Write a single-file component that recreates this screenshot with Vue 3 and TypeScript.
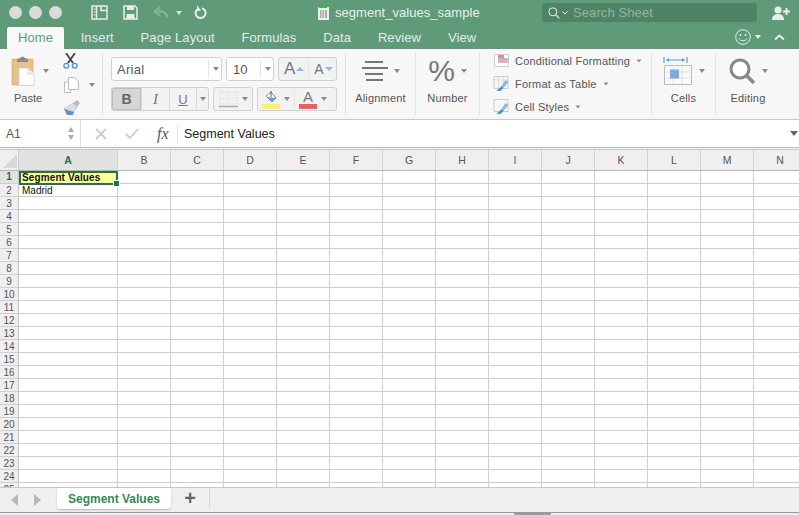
<script setup lang="ts">
const tabs: string[] = ['Insert', 'Page Layout', 'Formulas', 'Data', 'Review', 'View']
const cols: string[] = 'BCDEFGHIJKLMN'.split('')
const rows: number[] = Array.from({ length: 25 }, (_, i) => i + 1)
</script>

<template>
  <div class="window">
    <header class="titlebar">
      <div class="lights"><i></i><i></i><i></i></div>
      <svg class="ti sidebar" width="17" height="15" viewBox="0 0 17 15"><path d="M1 1h15v13H1zM5.500 1v13M10 1v4.500h6" fill="none" stroke="#e6efe9" stroke-width="1.500"/><path d="M2.500 4h2M2.500 7h2M2.500 10h2" stroke="#e6efe9"/></svg>
      <svg class="ti save" width="15" height="15" viewBox="0 0 15 15"><path d="M1 1h11l2 2v11H1z" fill="none" stroke="#e6efe9" stroke-width="1.500"/><path d="M4 1h7v4H4zM3.500 9h8v5h-8z" fill="#e6efe9"/></svg>
      <svg class="ti undo" width="16" height="13" viewBox="0 0 16 13"><path d="M14.500 11.500C14 7 10 4.500 5 5.500M7 1 2 5.500l5 4" fill="none" stroke="#8fb8a0" stroke-width="2"/></svg>
      <span class="tri small light dim"></span>
      <svg class="ti redo" width="13" height="15" viewBox="0 0 13 15"><path d="M8 3.200A5 5 0 1 1 3 4.500" fill="none" stroke="#e6efe9" stroke-width="2"/><path d="M3 0v6.500l4-1z" fill="#e6efe9"/></svg>
      <div class="doc">
        <svg width="11" height="15" viewBox="0 0 11 15"><path d="M0 2h11v13H0z" fill="#eef2ef"/><path d="M1 0h8v3H1z" fill="#39b54a"/><path d="M2 5h7v8H2z" fill="#aab4ae"/><path d="M4 5v8M6.500 5v8" stroke="#eef2ef" stroke-width=".7"/></svg>
        <span>segment_values_sample</span>
      </div>
      <div class="search">
        <svg width="12" height="12" viewBox="0 0 12 12"><circle cx="4.800" cy="4.800" r="4" fill="none" stroke="#e6efe9" stroke-width="1"/><path d="m7.800 7.800 3.500 3.500" stroke="#e6efe9" stroke-width="1.200"/></svg>
        <svg class="chev" width="6" height="4" viewBox="0 0 6 4"><path d="m.5.500 2.500 2.500L5.500.500" fill="none" stroke="#e6efe9"/></svg>
        <span>Search Sheet</span>
      </div>
      <svg class="person" width="18" height="14" viewBox="0 0 18 14"><circle cx="6" cy="4" r="3.500" fill="#e6efe9"/><path d="M0 14c0-4 2.500-6 6-6s6 2 6 6z" fill="#e6efe9"/><path d="M11 5.500h7M14.500 2v7" stroke="#e6efe9" stroke-width="2"/></svg>
    </header>

    <nav class="tabbar">
      <span class="tab home">Home</span>
      <span v-for="t in tabs" :key="t" class="tab">{{ t }}</span>
      <div class="tabright">
        <svg width="16" height="16" viewBox="0 0 16 16"><circle cx="8" cy="8" r="7.300" fill="none" stroke="#e6efe9"/><circle cx="5.500" cy="6" r="1" fill="#e6efe9"/><circle cx="10.500" cy="6" r="1" fill="#e6efe9"/><path d="M4 9.500c1.500 3 6.500 3 8 0" fill="none" stroke="#e6efe9"/></svg>
        <span class="tri small light"></span>
        <svg class="caret" width="11" height="7" viewBox="0 0 11 7"><path d="m1 5.500 4.500-4 4.500 4" fill="none" stroke="#e6efe9" stroke-width="2"/></svg>
      </div>
    </nav>

    <section class="ribbon">
      <div class="paste">
        <div class="paste-top">
          <svg width="24" height="30" viewBox="0 0 24 30"><rect x="1" y="3" width="21" height="26" rx="1" fill="#e8c08e" stroke="#c9a272" stroke-width=".6"/><path d="M6 4c0-2 3-1 3.500-2.500C10 .5 13 .5 13.500 1.500 14 3 17 2 17 4v2H6z" fill="#8a8a8a"/><path d="M8 12h9l6 6v11.500H8z" fill="#fff" stroke="#ccc" stroke-width=".7"/><path d="M17 12v6h6" fill="#f2f2f2" stroke="#ccc" stroke-width=".7"/></svg>
          <span class="tri"></span>
        </div>
        <span class="lbl">Paste</span>
      </div>
      <div class="clip">
        <svg width="15" height="16" viewBox="0 0 15 16"><path d="M3 0l7 10M12 0 5 10" stroke="#444" stroke-width="1.800"/><circle cx="3.300" cy="12.800" r="2.400" fill="none" stroke="#4a90d9" stroke-width="1.200"/><circle cx="11.700" cy="12.800" r="2.400" fill="none" stroke="#4a90d9" stroke-width="1.200"/></svg>
        <div class="copy">
          <svg width="15" height="16" viewBox="0 0 15 16"><path d="M.5 5h6v10.500h-6z" fill="#fff" stroke="#bbb"/><path d="M4.500.500h6l4 4v8h-10z" fill="#fff" stroke="#bbb"/></svg>
          <span class="tri"></span>
        </div>
        <svg width="17" height="15" viewBox="0 0 17 15"><path d="M10 3l4-3 3 3-3 4z" fill="#bbb"/><path d="M10 3l4 4-3 5L1 9z" fill="#ddd" stroke="#aaa" stroke-width=".5"/><path d="M1 9l10 3-1 3H4z" fill="#5b93cc"/></svg>
      </div>
      <i class="sep first"></i>
      <div class="font">
        <div class="frow">
          <div class="box fname"><span>Arial</span><em></em><span class="tri"></span></div>
          <div class="box fsize"><span>10</span><em></em><span class="tri"></span></div>
          <div class="box fgrow">
            <span class="big">A</span><span class="up"></span><em></em><span class="mid">A</span><span class="down"></span>
          </div>
        </div>
        <div class="frow second">
          <div class="box style">
            <b class="cell active">B</b>
            <i class="cell italic">I</i>
            <u class="cell ul">U</u>
            <span class="tri"></span>
          </div>
          <div class="box border">
            <svg width="19" height="17" viewBox="0 0 19 17"><path d="M1 1h17v12H1zM9.500 1v12M1 7h17" fill="none" stroke="#ddd" stroke-dasharray="1.500 1"/><path d="M0 15.500h19" stroke="#aaa" stroke-width="1.500"/></svg>
            <span class="tri"></span>
          </div>
          <div class="box color">
            <div class="swatch fill">
              <svg width="14" height="14" viewBox="0 0 14 14"><path d="M2 6l5-4 5 6-4 4z" fill="#fff" stroke="#6a8fb5"/><path d="M7 1v6" stroke="#555"/><path d="M3 7l5 5 4-4z" fill="#6aa0d8"/></svg>
              <span class="bar yellow"></span>
            </div>
            <span class="tri"></span>
            <em></em>
            <div class="swatch text">
              <span class="letter">A</span>
              <span class="bar red"></span>
            </div>
            <span class="tri"></span>
          </div>
        </div>
      </div>
      <i class="sep"></i>
      <div class="group g-align">
        <div class="gicon">
          <svg width="26" height="20" viewBox="0 0 26 20"><path d="M3 1h18M0 7h26M3 13h18M4 19h17" stroke="#777" stroke-width="1.800"/></svg>
          <span class="tri"></span>
        </div>
        <span class="lbl">Alignment</span>
      </div>
      <i class="sep"></i>
      <div class="group g-num">
        <div class="gicon">
          <span class="pct">%</span>
          <span class="tri"></span>
        </div>
        <span class="lbl">Number</span>
      </div>
      <i class="sep"></i>
      <div class="styles">
        <div class="srow">
          <svg width="15" height="13" viewBox="0 0 15 13"><path d="M.5.500h14v12H.5z" fill="#fff" stroke="#ccc"/><path d="M4 1h6v3H4z" fill="#e58a8a"/><path d="M4 4h10v2H4z" fill="#9cc2e8"/><path d="M4 6h10v3H4z" fill="#f0a8a8"/></svg>
          <span>Conditional Formatting</span><span class="tri"></span>
        </div>
        <div class="srow">
          <svg width="16" height="16" viewBox="0 0 16 16"><path d="M.5.500h14v12H.5z" fill="#f4f4f4" stroke="#ccc"/><path d="M.5 4h14M5 .5v12M10 .5v12" stroke="#ddd"/><path d="M12 4l3 2-5 6-2-2z" fill="#8fb7e0"/><path d="M8 10l2 2-3 3H3z" fill="#4a90d9"/></svg>
          <span>Format as Table</span><span class="tri"></span>
        </div>
        <div class="srow">
          <svg width="16" height="16" viewBox="0 0 16 16"><path d="M.5.500h14v12H.5z" fill="#f8f8f8" stroke="#ccc"/><path d="M12 4l3 2-5 6-2-2z" fill="#8fb7e0"/><path d="M8 10l2 2-3 3H3z" fill="#4a90d9"/></svg>
          <span>Cell Styles</span><span class="tri"></span>
        </div>
      </div>
      <i class="sep"></i>
      <div class="group g-cells">
        <div class="gicon">
          <svg width="30" height="29" viewBox="0 0 30 29"><path d="M1 0v6M24 0v6M4 3h17" stroke="#5b9bd5" stroke-width="1.200"/><path d="m3 3 3-2v4zM22 3l-3-2v4z" fill="#5b9bd5"/><path d="M1.500 8.500h27v19h-27z" fill="#f8f8f8" stroke="#bbb"/><path d="M10 9v18M19 9v18M2 15h26M2 21h26" stroke="#e2e2e2"/><path d="M7 12.500h9v9H7z" fill="#7eabdc"/></svg>
          <span class="tri"></span>
        </div>
        <span class="lbl">Cells</span>
      </div>
      <i class="sep"></i>
      <div class="group g-edit">
        <div class="gicon">
          <svg width="27" height="27" viewBox="0 0 27 27"><circle cx="11" cy="11" r="9" fill="#fff" stroke="#888" stroke-width="3"/><path d="m17 17 8 8" stroke="#888" stroke-width="3.500"/></svg>
          <span class="tri"></span>
        </div>
        <span class="lbl">Editing</span>
      </div>
    </section>

    <section class="formula">
      <div class="namebox">
        <span>A1</span>
        <div class="spin"><b></b><s></s></div>
      </div>
      <svg class="fx-x" width="12" height="12" viewBox="0 0 12 12"><path d="m1 1 10 10M11 1 1 11" stroke="#ccc" stroke-width="1.800"/></svg>
      <svg class="fx-c" width="14" height="11" viewBox="0 0 14 11"><path d="m1 6 4 4 8-9" fill="none" stroke="#ccc" stroke-width="1.800"/></svg>
      <span class="fx">fx</span>
      <i class="fsep"></i>
      <span class="ftext">Segment Values</span>
      <span class="fdrop"></span>
    </section>

    <main class="sheet">
      <div class="hrow">
        <div class="corner"><span></span></div>
        <div class="colhead sel">A</div>
        <div v-for="c in cols" :key="c" class="colhead">{{ c }}</div>
      </div>
      <div v-for="r in rows" :key="r" class="row">
        <div class="rowhead" :class="{ sel: r === 1 }">{{ r }}</div>
        <div class="c a" :class="{ selected: r === 1 }">
          <template v-if="r === 1"><b>Segment Values</b><span class="handle"></span></template>
          <template v-else-if="r === 2">Madrid</template>
        </div>
        <div v-for="c in cols" :key="c" class="c"></div>
      </div>
    </main>

    <footer class="sheetbar">
      <span class="nav left"></span>
      <span class="nav right"></span>
      <div class="sheettab">Segment Values</div>
      <span class="plus">+</span>
      <i class="barsep"></i>
    </footer>
    <div class="statusline"><span></span></div>
  </div>
</template>

<style scoped>
.window { width: 799px; height: 515px; overflow: hidden; background: #f5f5f5; font-family: "Liberation Sans", Arial, sans-serif; color: #555; display: flex; flex-direction: column; }
.titlebar { height: 25px; background: #5f9a79; display: flex; align-items: center; flex: none; position: relative; }
.lights { display: flex; gap: 7px; margin-left: 9px; }
.lights i { width: 13px; height: 13px; border-radius: 50%; background: #d9dcda; }
.ti { flex: none; }
.sidebar { margin-left: 29px; }
.save { margin-left: 15px; }
.undo { margin-left: 15px; opacity: .9; }
.dim { margin-left: 7px; opacity: .9; }
.redo { margin-left: 12px; }
.doc { display: flex; align-items: center; gap: 6px; margin-left: 111px; color: #e8f0eb; font-size: 13px; letter-spacing: .04px; width: 224px; flex: none; }
.search { width: 215px; height: 19px; background: #4f8366; border-radius: 3px; display: flex; align-items: center; padding-left: 6px; box-sizing: border-box; color: #8db79f; font-size: 13px; letter-spacing: .1px; flex: none; }
.chev { margin: 0 5px 0 2px; }
.person { margin-left: 15px; }
.tabbar { height: 24px; background: #5f9a79; display: flex; align-items: flex-end; font-size: 13px; flex: none; }
.tab { height: 22px; line-height: 21px; padding: 0 13.4px; color: #e3ece6; letter-spacing: .1px; }
.tab.home { background: #f8f8f8; color: #5f9a79; margin: 0 3.200px 0 7px; padding: 0 11px; border-radius: 2px 2px 0 0; }
.tabright { margin-left: auto; height: 24px; display: flex; align-items: center; gap: 4px; padding-right: 14px; margin-top: -4px; }
.caret { margin-left: 9px; }

.tri { display: inline-block; width: 0; height: 0; border-left: 3px solid transparent; border-right: 3px solid transparent; border-top: 4px solid #8a8a8a; flex: none; }
.tri.light { border-top-color: #e6efe9; }

.ribbon { height: 70px; flex: none; display: flex; background: #f7f7f7; border-bottom: 1px solid #c9c9c9; box-sizing: content-box; }
.lbl { font-size: 11px; color: #555; letter-spacing: .2px; }
.paste { width: 58px; flex: none; display: flex; flex-direction: column; padding-left: 11px; box-sizing: border-box; }
.paste-top { display: flex; align-items: center; gap: 8px; margin-top: 7px; height: 30px; }
.paste .lbl { margin: 6px 0 0 3px; letter-spacing: 0; }
.clip { width: 44px; flex: none; display: flex; flex-direction: column; padding: 4px 0 0 5px; box-sizing: border-box; gap: 7.500px; }
.copy { display: flex; align-items: center; gap: 10px; height: 16px; margin-left: 1px; }
.sep { width: 1px; height: 62px; background: #e2e2e2; margin-top: 4px; flex: none; }
.font { width: 242px; flex: none; padding: 8px 0 0 8px; box-sizing: border-box; }
.frow { display: flex; gap: 4px; height: 24px; }
.frow.second { margin-top: 6px; }
.box { border: 1px solid #d0d0d0; border-radius: 3px; background: #fff; display: flex; align-items: center; box-sizing: border-box; height: 24px; font-size: 13px; color: #555; }
.box em { width: 1px; height: 18px; background: #e4e4e4; flex: none; }
.fname { width: 111px; padding-left: 5px; }
.fname span:first-child { width: 91px; letter-spacing: .3px; }
.fname .tri, .fsize .tri { margin-left: 4px; }
.fsize { width: 48px; padding-left: 6px; }
.fsize span:first-child { width: 27px; }
.fgrow { width: 59px; background: #f2f2f2; padding-left: 5px; }
.big { font-size: 17px; color: #777; }
.mid { font-size: 14px; color: #777; margin-left: 5px; }
.up { width: 0; height: 0; border: 4px solid transparent; border-top: 0; border-bottom: 4px solid #8db8e6; margin: 0 4px 0 1px; }
.down { width: 0; height: 0; border: 4px solid transparent; border-bottom: 0; border-top: 4px solid #8db8e6; margin-left: 1px; }
.style { width: 98px; background: #f2f2f2; overflow: hidden; }
.cell { display: flex; height: 100%; align-items: center; justify-content: center; width: 28px; border-right: 1px solid #dcdcdc; box-sizing: border-box; font-size: 14px; color: #777; font-family: "Liberation Serif", serif; }
.cell.active { width: 30px; background: #d6d6d6; color: #666; font-family: "Liberation Sans", sans-serif; box-shadow: inset 0 0 0 1px #bdbdbd; }
.cell.italic { width: 28px; font-size: 15px; }
.cell.ul { width: 27px; font-family: "Liberation Sans", sans-serif; font-size: 13px; }
.style .tri { margin-left: 3px; }
.border { width: 40px; background: #f2f2f2; padding-left: 5px; gap: 4px; }
.color { width: 80px; background: #f2f2f2; padding-left: 4px; }
.color .tri { margin-left: 4px; }
.color em { margin-left: 4px; }
.swatch { display: flex; flex-direction: column; align-items: center; width: 18px; }
.swatch.text { margin-left: 4px; }
.letter { font-size: 15px; line-height: 15px; color: #777; }
.bar { width: 18px; height: 5px; display: block; }
.yellow { background: #fdf06a; }
.red { background: #f55a63; }
.group { display: flex; flex-direction: column; align-items: center; flex: none; }
.gicon { display: flex; align-items: center; gap: 6px; height: 34px; margin-top: 5px; }
.group .lbl { margin-top: 4px; }
.g-align { width: 69px; }
.g-num { width: 63px; }
.g-cells { width: 63px; }
.g-edit { width: 64px; }
.pct { font-size: 30px; line-height: 36px; color: #777; font-family: "Liberation Sans", sans-serif; }
.styles { width: 171px; flex: none; padding: 0 0 0 13px; box-sizing: border-box; font-size: 11px; color: #555; letter-spacing: .2px; }
.srow { display: flex; align-items: center; height: 23px; gap: 5px; }
.srow svg { width: 17px; flex: none; }
.srow .tri { margin-left: 1px; transform: scale(.8); }

.formula { height: 27px; flex: none; display: flex; align-items: center; background: #fff; border-bottom: 1px solid #bdbdbd; box-sizing: content-box; }
.namebox { width: 81px; height: 100%; display: flex; align-items: center; justify-content: space-between; padding: 0 6px; box-sizing: border-box; border-right: 1px solid #ddd; font-size: 12px; color: #555; flex: none; }
.spin { display: flex; flex-direction: column; gap: 3px; }
.spin b { width: 0; height: 0; border: 3.500px solid transparent; border-top: 0; border-bottom: 5px solid #aaa; }
.spin s { width: 0; height: 0; border: 3.500px solid transparent; border-bottom: 0; border-top: 5px solid #aaa; }
.fx-x { margin-left: 14px; }
.fx-c { margin-left: 18px; }
.fx { font-family: "Liberation Serif", serif; font-style: italic; font-size: 16px; color: #555; margin-left: 18px; width: 17px; }
.fsep { width: 1px; height: 18px; background: #e2e2e2; margin-left: 3px; }
.ftext { font-size: 12.500px; color: #222; margin-left: 6px; }
.fdrop { margin-left: auto; margin-right: 1px; width: 0; height: 0; border: 4px solid transparent; border-bottom: 0; border-top: 5px solid #666; }

.sheet { height: 338px; flex: none; overflow: hidden; background: #fff; border-top: 1px solid #c4c4c4; margin-top: 1px; box-sizing: border-box; width: 799px; }
.hrow { display: flex; height: 21px; background: #efefef; border-bottom: 1px solid #b4b4b4; box-sizing: border-box; width: 810px; }
.row { display: flex; height: 13px; width: 810px; }
.corner { width: 19px; flex: none; border-right: 1px solid #ccc; box-sizing: border-box; position: relative; }
.corner span { position: absolute; right: 1px; bottom: 2px; width: 0; height: 0; border-left: 14px solid transparent; border-bottom: 14px solid #d8d8d8; }
.colhead { width: 53px; flex: none; text-align: center; font-size: 10.500px; line-height: 20px; color: #555; border-right: 1px solid #d4d4d4; box-sizing: border-box; }
.colhead.sel { width: 99px; background: #e2e2e2; color: #217346; font-weight: bold; }
.rowhead { width: 19px; flex: none; background: #efefef; border-right: 1px solid #c4c4c4; border-bottom: 1px solid #d0d0d0; box-sizing: border-box; font-size: 10px; line-height: 14px; height: 13px; text-align: center; color: #555; }
.rowhead.sel { background: #e2e2e2; color: #217346; font-weight: bold; line-height: 12px; }
.c { width: 53px; flex: none; border-right: 1px solid #cfcfcf; border-bottom: 1px solid #cfcfcf; box-sizing: border-box; font-size: 10px; line-height: 14px; height: 13px; color: #111; padding-left: 3px; }
.c.a { width: 99px; }
.c.selected { background: #ffff99; position: relative; box-shadow: inset 0 0 0 2px #217346; border: 0; line-height: 14px; height: 14px; letter-spacing: .12px; z-index: 1; }
.handle { position: absolute; right: -2px; bottom: -2px; width: 5px; height: 5px; background: #217346; border: 1px solid #fff; box-sizing: content-box; }

.sheetbar { height: 25px; flex: none; display: flex; align-items: flex-start; background: #f0f0f0; border-top: 1px solid #c8c8c8; box-sizing: border-box; position: relative; }
.nav { width: 0; height: 0; margin-top: 6px; border: 6px solid transparent; }
.nav.left { border-left: 0; border-right: 7px solid #b8b8b8; margin-left: 11px; }
.nav.right { border-right: 0; border-left: 7px solid #b8b8b8; margin-left: 16px; }
.sheettab { width: 114px; height: 21px; margin-left: 16px; background: #fff; box-shadow: 0 1px 2px rgba(0,0,0,.25); border-radius: 0 0 3px 3px; text-align: center; line-height: 22px; font-size: 12px; font-weight: bold; color: #2f8a5b; }
.plus { width: 38px; text-align: center; font-size: 20px; line-height: 21px; font-weight: bold; color: #666; }
.barsep { width: 1px; height: 20px; background: #d4d4d4; }
.statusline { height: 3px; flex: none; background: #f0f0f0; border-top: 1px solid #9a9a9a; box-sizing: border-box; }
.statusline span { display: block; width: 37px; height: 2px; margin-left: 514px; background: #9c9c9c; }
</style>

<style>
html, body { margin: 0; overflow: hidden; background: #f5f5f5; }
</style>
